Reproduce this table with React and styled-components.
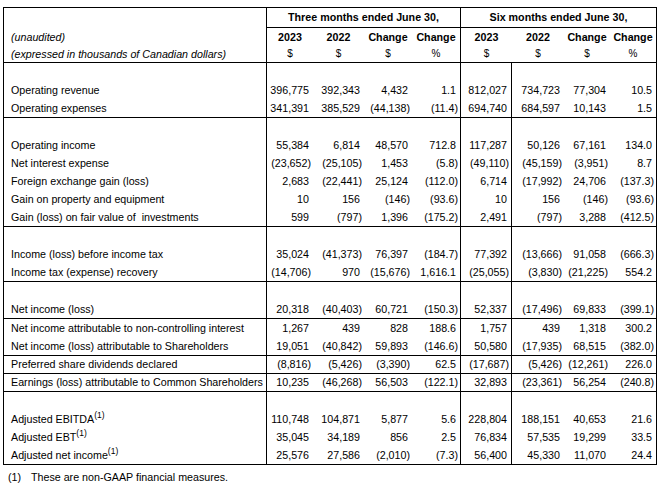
import React from "react";
import styled, { createGlobalStyle } from "styled-components";

const GlobalStyle = createGlobalStyle`
  body {
    margin: 0;
    background: #fff;
    color: #000;
    font-family: "Liberation Sans", Arial, sans-serif;
  }
`;

const COLS = "263px 46px 51px 48px 49px 51px 52px 46px 46px";

const Page = styled.div`
  width: 662px;
  height: 490px;
  padding: 7px 0 0 3px;
  box-sizing: border-box;
`;

const Sheet = styled.div`
  width: 654px;
  border: 1px solid #000;
  box-sizing: border-box;
  font-size: 10.7px;
`;

const Row = styled.div`
  display: grid;
  grid-template-columns: ${COLS};
  height: ${(p) => p.$h || 18}px;
  border-top: ${(p) => (p.$line ? "1px solid #000" : "none")};
`;

const Cell = styled.div`
  box-sizing: border-box;
  height: 100%;
  line-height: ${(p) => p.$lh || 18}px;
  white-space: pre;
  overflow: visible;
  border-right: ${(p) => (p.$divider ? "1px solid #000" : "none")};
`;

const Label = styled(Cell)`
  padding-left: 7px;
  font-style: ${(p) => (p.$italic ? "italic" : "normal")};
`;

const Group = styled(Cell)`
  grid-column: span 4;
  text-align: center;
  font-weight: bold;
  border-bottom: 1px solid #000;
`;

const Head = styled(Cell)`
  text-align: center;
  font-weight: bold;
`;

const Unit = styled(Cell)`
  text-align: center;
  font-size: 10px;
`;

const Num = styled(Cell)`
  text-align: right;
  padding-right: ${(p) => (p.$neg ? 2 : 4)}px;
`;

const Sup = styled.sup`
  font-size: 8.5px;
  line-height: 0;
  vertical-align: 5px;
`;

const Footnote = styled.div`
  padding: 3px 0 0 5px;
  font-size: 10.7px;
  line-height: 18px;
  white-space: pre;
`;

const Mark = styled.span`
  display: inline-block;
  width: 23px;
`;

const sections = [
  {
    spacer: true,
    rows: [
      ["Operating revenue", ["396,775", "392,343", "4,432", "1.1", "812,027", "734,723", "77,304", "10.5"]],
      ["Operating expenses", ["341,391", "385,529", "(44,138)", "(11.4)", "694,740", "684,597", "10,143", "1.5"]],
    ],
  },
  {
    spacer: true,
    rows: [
      ["Operating income", ["55,384", "6,814", "48,570", "712.8", "117,287", "50,126", "67,161", "134.0"]],
      ["Net interest expense", ["(23,652)", "(25,105)", "1,453", "(5.8)", "(49,110)", "(45,159)", "(3,951)", "8.7"]],
      ["Foreign exchange gain (loss)", ["2,683", "(22,441)", "25,124", "(112.0)", "6,714", "(17,992)", "24,706", "(137.3)"]],
      ["Gain on property and equipment", ["10", "156", "(146)", "(93.6)", "10", "156", "(146)", "(93.6)"]],
      ["Gain (loss) on fair value of  investments", ["599", "(797)", "1,396", "(175.2)", "2,491", "(797)", "3,288", "(412.5)"]],
    ],
  },
  {
    spacer: true,
    rows: [
      ["Income (loss) before income tax", ["35,024", "(41,373)", "76,397", "(184.7)", "77,392", "(13,666)", "91,058", "(666.3)"]],
      ["Income tax (expense) recovery", ["(14,706)", "970", "(15,676)", "1,616.1", "(25,055)", "(3,830)", "(21,225)", "554.2"]],
    ],
  },
  {
    spacer: true,
    rows: [
      ["Net income (loss)", ["20,318", "(40,403)", "60,721", "(150.3)", "52,337", "(17,496)", "69,833", "(399.1)"]],
    ],
  },
  {
    rows: [
      ["Net income attributable to non-controlling interest", ["1,267", "439", "828", "188.6", "1,757", "439", "1,318", "300.2"]],
      ["Net income (loss) attributable to Shareholders", ["19,051", "(40,842)", "59,893", "(146.6)", "50,580", "(17,935)", "68,515", "(382.0)"]],
    ],
  },
  {
    h: 17,
    rows: [
      ["Preferred share dividends declared", ["(8,816)", "(5,426)", "(3,390)", "62.5", "(17,687)", "(5,426)", "(12,261)", "226.0"]],
    ],
  },
  {
    h: 17,
    rows: [
      ["Earnings (loss) attributable to Common Shareholders", ["10,235", "(46,268)", "56,503", "(122.1)", "32,893", "(23,361)", "56,254", "(240.8)"]],
    ],
  },
  {
    spacer: true,
    rows: [
      ["Adjusted EBITDA", ["110,748", "104,871", "5,877", "5.6", "228,804", "188,151", "40,653", "21.6"], true],
      ["Adjusted EBT", ["35,045", "34,189", "856", "2.5", "76,834", "57,535", "19,299", "33.5"], true],
      ["Adjusted net income", ["25,576", "27,586", "(2,010)", "(7.3)", "56,400", "45,330", "11,070", "24.4"], true],
    ],
  },
];

const bodyDivider = (i) => i === 4 || i === 5;

const SpacerRow = ({ line }) => (
  <Row $line={line}>
    <Cell $divider />
    {Array.from({ length: 8 }, (_, i) => (
      <Cell key={i} $divider={bodyDivider(i + 1)} />
    ))}
  </Row>
);

const DataRow = ({ label, values, note, line, h }) => (
  <Row $line={line} $h={h}>
    <Label $divider $lh={h}>
      {label}
      {note && <Sup>(1)</Sup>}
    </Label>
    {values.map((v, i) => (
      <Num key={i} $lh={h} $neg={v.startsWith("(")} $divider={bodyDivider(i + 1)}>
        {v}
      </Num>
    ))}
  </Row>
);

const years = ["2023", "2022", "Change", "Change"];
const units = ["$", "$", "$", "%"];

export default function App() {
  return (
    <Page>
      <GlobalStyle />
      <Sheet>
        <Row $h={20}>
          <Cell $divider />
          <Group $divider>Three months ended June 30,</Group>
          <Group>Six months ended June 30,</Group>
        </Row>
        <Row>
          <Label $divider $italic>(unaudited)</Label>
          {[...years, ...years].map((y, i) => (
            <Head key={i} $divider={i === 3}>{y}</Head>
          ))}
        </Row>
        <Row $h={16}>
          <Label $divider $italic $lh={16}>(expressed in thousands of Canadian dollars)</Label>
          {[...units, ...units].map((u, i) => (
            <Unit key={i} $lh={16} $divider={i === 3}>{u}</Unit>
          ))}
        </Row>
        {sections.map((s, si) => (
          <React.Fragment key={si}>
            {s.spacer && <SpacerRow line />}
            {s.rows.map(([label, values, note], ri) => (
              <DataRow
                key={ri}
                label={label}
                values={values}
                note={note}
                h={s.h}
                line={!s.spacer && ri === 0}
              />
            ))}
          </React.Fragment>
        ))}
      </Sheet>
      <Footnote>
        <Mark>(1)</Mark>These are non-GAAP financial measures.
      </Footnote>
    </Page>
  );
}
